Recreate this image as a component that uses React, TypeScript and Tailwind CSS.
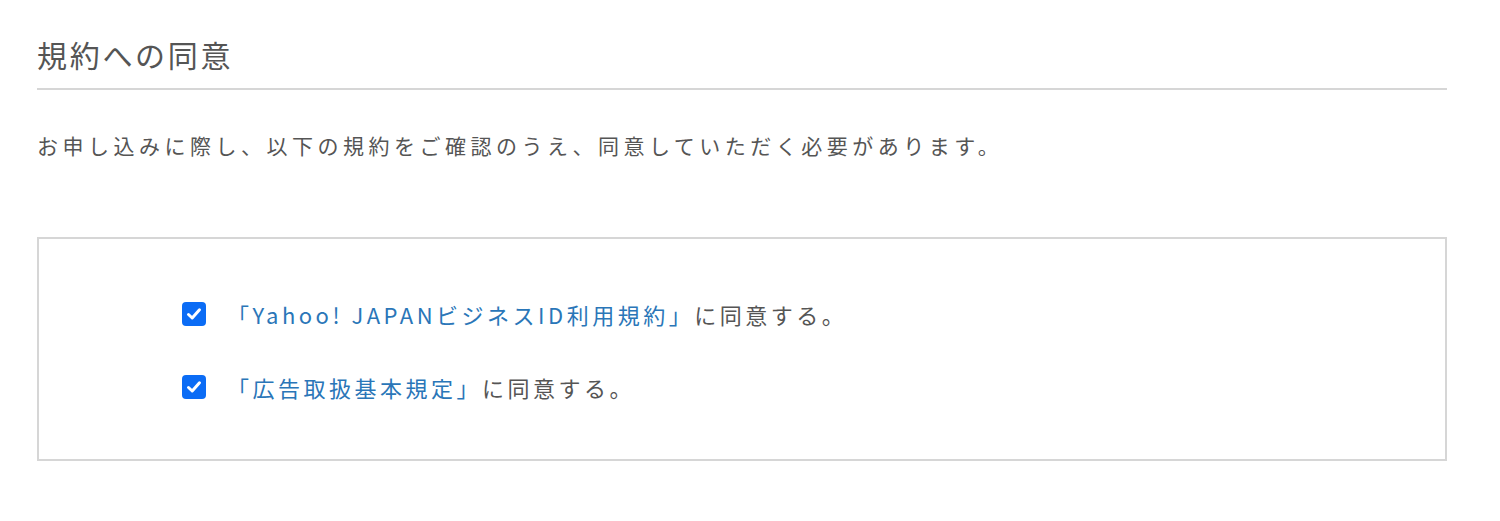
import React from "react";

const font = { fontFamily: '"Noto Sans CJK JP", "Noto Sans", sans-serif' };

function Check() {
  return (
    <span className="flex h-[24px] w-[24px] shrink-0 items-center justify-center rounded-[4px] bg-[#0b6cf5]">
      <svg width="18" height="18" viewBox="0 0 18 18">
        <path d="M3.5 9.5 L7.2 13 L14.5 4.8" fill="none" stroke="#fff" strokeWidth="3" strokeLinecap="round" strokeLinejoin="round" />
      </svg>
    </span>
  );
}

export default function App() {
  return (
    <div className="min-h-[521px] bg-white pl-[37px] pr-[53px] pt-[34px] text-[#555]" style={font}>
      <h2 className="border-b-2 border-[#d6d6d6] pb-[14px] text-[30px] leading-[40px] tracking-[2.7px] text-[#555]">規約への同意</h2>
      <p className="mt-[40px] text-[21px] leading-[30px] tracking-[4.5px]">お申し込みに際し、以下の規約をご確認のうえ、同意していただく必要があります。</p>
      <div className="mt-[77px] flex h-[224px] flex-col gap-[43px] border-2 border-[#d6d6d6] pl-[143px] pt-[60px]">
        <label className="flex items-center gap-[21px] text-[22px] leading-[30px] tracking-[3.5px]">
          <Check />
          <span><span className="text-[#2a76b8]">「Yahoo! JAPANビジネスID利用規約」</span>に同意する。</span>
        </label>
        <label className="flex items-center gap-[21px] text-[22px] leading-[30px] tracking-[3.5px]">
          <Check />
          <span><span className="text-[#2a76b8]">「広告取扱基本規定」</span>に同意する。</span>
        </label>
      </div>
    </div>
  );
}
